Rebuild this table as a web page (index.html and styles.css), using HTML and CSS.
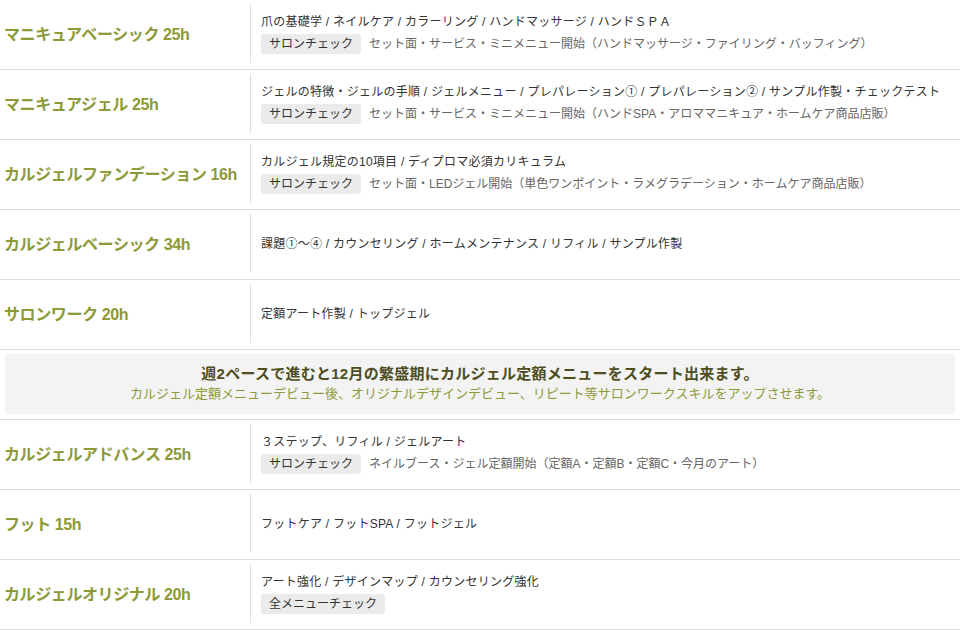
FILE: index.html
```html
<!DOCTYPE html>
<html lang="ja">
<head>
  <meta charset="UTF-8">
  <meta name="viewport" content="width=device-width, initial-scale=1.0">
  <title>カリキュラム</title>
  <link rel="stylesheet" href="styles.css">
</head>
<body>
  <div class="curriculum">
    <div class="course">
      <h3 class="course-title">マニキュアベーシック 25h</h3>
      <div class="course-body">
        <p class="course-topics">爪の基礎学 / ネイルケア / カラーリング / ハンドマッサージ / ハンドＳＰＡ</p>
        <p class="course-check"><span class="badge">サロンチェック</span>セット面・サービス・ミニメニュー開始（ハンドマッサージ・ファイリング・バッフィング）</p>
      </div>
    </div>
    <div class="course">
      <h3 class="course-title">マニキュアジェル 25h</h3>
      <div class="course-body">
        <p class="course-topics">ジェルの特徴・ジェルの手順 / ジェルメニュー / プレパレーション① / プレパレーション② / サンプル作製・チェックテスト</p>
        <p class="course-check"><span class="badge">サロンチェック</span>セット面・サービス・ミニメニュー開始（ハンドSPA・アロママニキュア・ホームケア商品店販）</p>
      </div>
    </div>
    <div class="course">
      <h3 class="course-title">カルジェルファンデーション 16h</h3>
      <div class="course-body">
        <p class="course-topics">カルジェル規定の10項目 / ディプロマ必須カリキュラム</p>
        <p class="course-check"><span class="badge">サロンチェック</span>セット面・LEDジェル開始（単色ワンポイント・ラメグラデーション・ホームケア商品店販）</p>
      </div>
    </div>
    <div class="course">
      <h3 class="course-title">カルジェルベーシック 34h</h3>
      <div class="course-body">
        <p class="course-topics">課題①〜④ / カウンセリング / ホームメンテナンス / リフィル / サンプル作製</p>
      </div>
    </div>
    <div class="course">
      <h3 class="course-title">サロンワーク 20h</h3>
      <div class="course-body">
        <p class="course-topics">定額アート作製 / トップジェル</p>
      </div>
    </div>

    <div class="note-row">
      <div class="note">
        <p class="note-main">週2ペースで進むと12月の繁盛期にカルジェル定額メニューをスタート出来ます。</p>
        <p class="note-sub">カルジェル定額メニューデビュー後、オリジナルデザインデビュー、リピート等サロンワークスキルをアップさせます。</p>
      </div>
    </div>

    <div class="course">
      <h3 class="course-title">カルジェルアドバンス 25h</h3>
      <div class="course-body">
        <p class="course-topics">３ステップ、リフィル / ジェルアート</p>
        <p class="course-check"><span class="badge">サロンチェック</span>ネイルブース・ジェル定額開始（定額A・定額B・定額C・今月のアート）</p>
      </div>
    </div>
    <div class="course">
      <h3 class="course-title">フット 15h</h3>
      <div class="course-body">
        <p class="course-topics">フットケア / フットSPA / フットジェル</p>
      </div>
    </div>
    <div class="course">
      <h3 class="course-title">カルジェルオリジナル 20h</h3>
      <div class="course-body">
        <p class="course-topics">アート強化 / デザインマップ / カウンセリング強化</p>
        <p class="course-check"><span class="badge">全メニューチェック</span></p>
      </div>
    </div>
  </div>
</body>
</html>
```

FILE: styles.css
```css
body {
  margin: 0;
  background-color: #fff;
  font-family: "Liberation Sans", "Noto Sans CJK JP", sans-serif;
  color: #333;
}
p, h3 {
  margin: 0;
}
.curriculum {
  width: 960px;
}
.course {
  display: flex;
  height: 69px;
  border-bottom: 1px solid #ddd;
}
.course-title {
  width: 246px;
  padding-left: 4px;
  align-self: center;
  font-size: 16px;
  font-weight: bold;
  line-height: 20px;
  letter-spacing: -0.4px;
  color: #8c9a37;
}
.course-body {
  flex: 1;
  display: flex;
  flex-direction: column;
  justify-content: center;
  margin: 4px 0 6px;
  padding-left: 10px;
  border-left: 1px solid #ddd;
}
.course-topics {
  font-size: 12px;
  line-height: 18px;
  letter-spacing: 0.25px;
}
.course-check {
  display: flex;
  align-items: center;
  margin-top: 3px;
  font-size: 12px;
  line-height: 20px;
  color: #666;
}
.badge {
  margin-right: 8px;
  padding: 0 8px;
  background-color: #ebebeb;
  border-radius: 3px;
  color: #333;
}
.note-row {
  height: 70px;
  box-sizing: border-box;
  padding: 4px 5px 5px;
  border-bottom: 1px solid #ddd;
}
.note {
  height: 60px;
  display: flex;
  flex-direction: column;
  justify-content: center;
  background-color: #f3f3f3;
  border-radius: 3px;
  text-align: center;
}
.note-main {
  font-size: 15px;
  font-weight: bold;
  line-height: 20px;
  letter-spacing: 0.25px;
  color: #4d4d1d;
}
.note-sub {
  font-size: 13px;
  line-height: 20px;
  color: #8c9a37;
}
```
